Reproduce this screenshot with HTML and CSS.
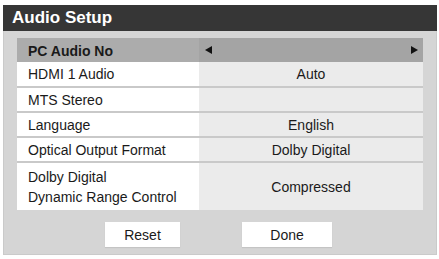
FILE: index.html
```html
<!DOCTYPE html>
<html>
<head>
<meta charset="utf-8">
<link rel="stylesheet" href="styles.css">
</head>
<body>
<div class="panel">
  <div class="header">Audio Setup</div>
  <div class="content">
    <div class="table">
      <div class="row row-sel">
        <div class="cell label bold">PC Audio No</div>
        <div class="cell value arrows">
          <svg class="arrow" width="7" height="8" viewBox="0 0 7 8"><polygon points="7,0 7,8 0,4" fill="#111"/></svg>
          <svg class="arrow" width="7" height="8" viewBox="0 0 7 8"><polygon points="0,0 0,8 7,4" fill="#111"/></svg>
        </div>
      </div>
      <div class="row row-first">
        <div class="cell label">HDMI 1 Audio</div>
        <div class="cell value">Auto</div>
      </div>
      <div class="row">
        <div class="cell label">MTS Stereo</div>
        <div class="cell value"></div>
      </div>
      <div class="row">
        <div class="cell label">Language</div>
        <div class="cell value">English</div>
      </div>
      <div class="row">
        <div class="cell label">Optical Output Format</div>
        <div class="cell value">Dolby Digital</div>
      </div>
      <div class="row row-tall">
        <div class="cell label two">Dolby Digital<br>Dynamic Range Control</div>
        <div class="cell value">Compressed</div>
      </div>
    </div>
    <div class="buttons">
      <div class="btn btn-reset">Reset</div>
      <div class="btn btn-done">Done</div>
    </div>
  </div>
</div>
</body>
</html>
```
FILE: styles.css
```css
html, body {
  margin: 0;
  padding: 0;
  background: #ffffff;
}
body {
  width: 439px;
  height: 259px;
  font-family: "Liberation Sans", Arial, sans-serif;
  color: #1a1a1a;
}
.panel {
  margin: 5px 0 0 3px;
  width: 434px;
  height: 250px;
  background: #d5d5d5;
  display: flex;
  flex-direction: column;
  box-shadow: inset 0 0 0 1px #cacaca;
}
.header {
  height: 26px;
  background: #363636;
  color: #ffffff;
  font-weight: bold;
  font-size: 17px;
  line-height: 26px;
  padding-left: 9px;
  box-sizing: border-box;
}
.content {
  padding: 7px 14px 0 14px;
  display: flex;
  flex-direction: column;
}
.table {
  display: flex;
  flex-direction: column;
  background: #cbcbcb;
}
.row {
  display: grid;
  grid-template-columns: 182px 224px;
  height: 23px;
  border-bottom: 2px solid #c9c9c9;
  font-size: 14px;
}
.row-first {
  height: 24px;
}
.row-sel {
  height: 24px;
  border-bottom: none;
  background: #a9a9a9;
}
.row-tall {
  height: 47px;
  border-bottom: none;
}
.cell {
  display: flex;
  align-items: center;
}
.label {
  background: #ffffff;
  padding-left: 11px;
}
.value {
  background: #ebebeb;
  justify-content: center;
}
.row-sel .label {
  background: #acacac;
  padding-top: 1px;
}
.row-sel .value {
  background: #a4a4a4;
  justify-content: space-between;
  padding: 0 5px 0 6px;
}
.bold {
  font-weight: bold;
}
.two {
  line-height: 20px;
  padding-top: 1px;
}
.buttons {
  display: flex;
  padding-top: 12px;
  padding-left: 88px;
}
.btn {
  height: 25px;
  background: #ffffff;
  font-size: 14px;
  display: flex;
  align-items: center;
  justify-content: center;
  box-shadow: 0 1px 1px #c4c4c4;
}
.btn-reset {
  width: 75px;
}
.btn-done {
  width: 90px;
  margin-left: 62px;
}
```
